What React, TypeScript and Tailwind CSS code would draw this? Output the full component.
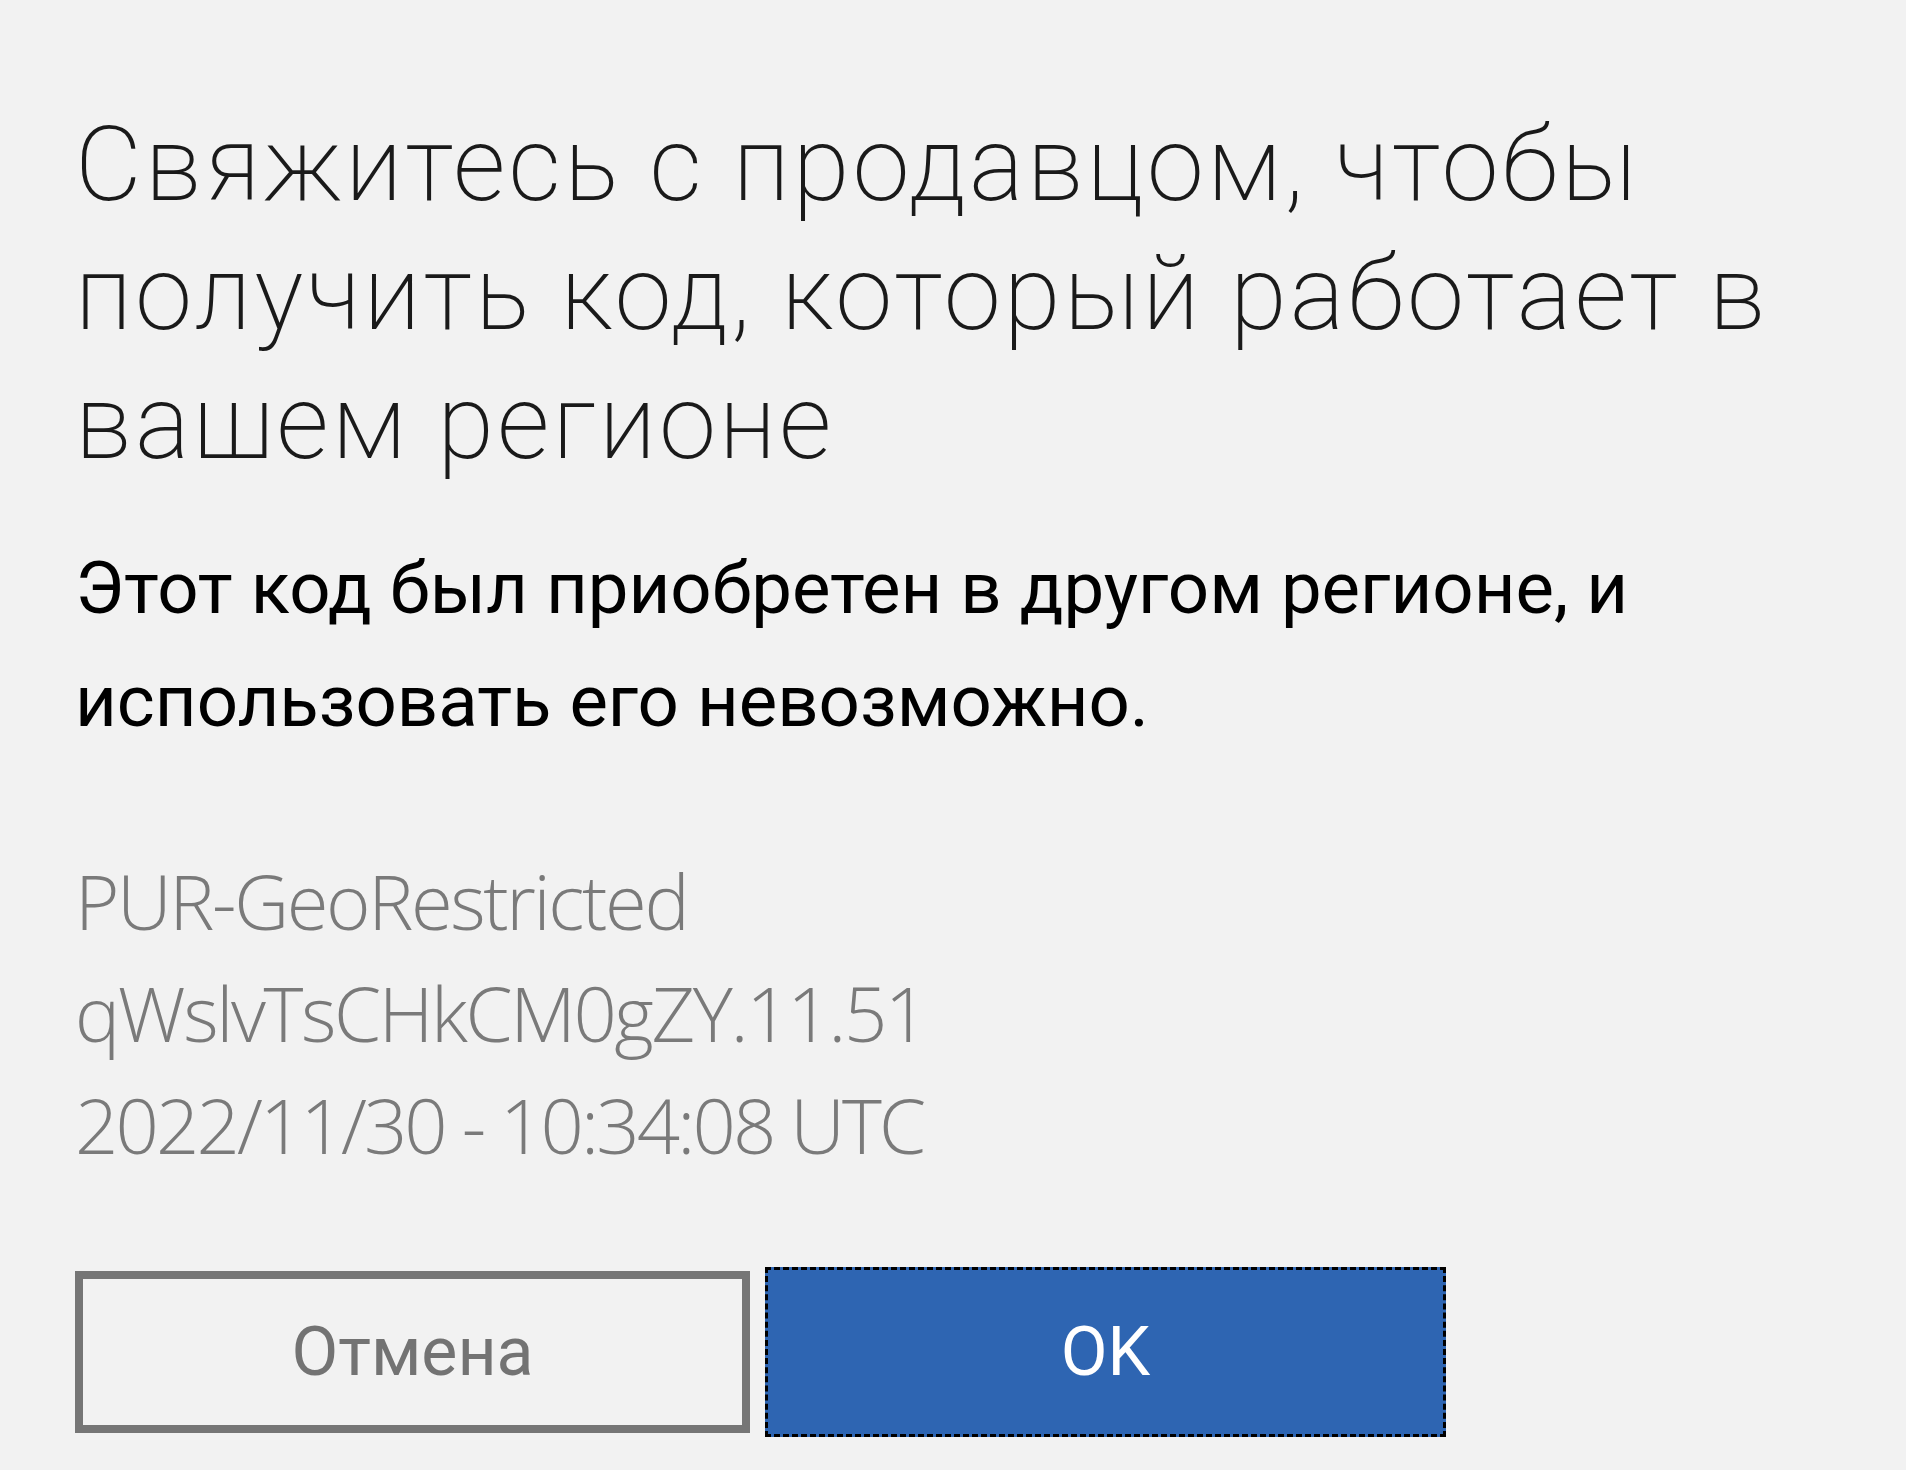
import { useState } from 'react'

function App() {
  const [focused] = useState('ok')

  return (
    <div className="min-h-[1470px] w-full bg-[#f2f2f2] px-[75px] pt-[100px] text-black">
      <h1 className="font-['Roboto','Liberation_Sans',sans-serif] text-[103px] font-extralight leading-[129px] tracking-[3px] text-[#1a1a1a]">
        Свяжитесь с продавцом, чтобы получить код, который работает в вашем регионе
      </h1>

      <p className="mt-[45px] font-['Roboto','Liberation_Sans',sans-serif] text-[72.5px] leading-[113px] text-black">
        Этот код был приобретен в другом регионе, и использовать его невозможно.
      </p>

      <div className="mt-[87px] font-['Open_Sans','Noto_Sans',sans-serif] text-[76px] font-light leading-[112px] tracking-[-2.4px] text-[#7a7a7a]">
        <div>PUR-GeoRestricted</div>
        <div>qWslvTsCHkCM0gZY.11.51</div>
        <div className="tracking-[-2.9px]">2022/11/30 - 10:34:08 UTC</div>
      </div>

      <div className="mt-[86px] flex items-center gap-[15px] font-['Roboto','Liberation_Sans',sans-serif] text-[68px]">
        <button className="flex h-[162px] w-[675px] items-center justify-center border-[8px] border-[#767676] bg-[#f2f2f2] text-[#737373]">
          Отмена
        </button>
        <button
          className={
            focused === 'ok'
              ? 'flex h-[170px] w-[681px] items-center justify-center border-[3px] border-dashed border-black bg-[#2e65b2] text-white'
              : 'flex h-[162px] w-[675px] items-center justify-center bg-[#2e65b2] text-white'
          }
        >
          OK
        </button>
      </div>
    </div>
  )
}

export default App
